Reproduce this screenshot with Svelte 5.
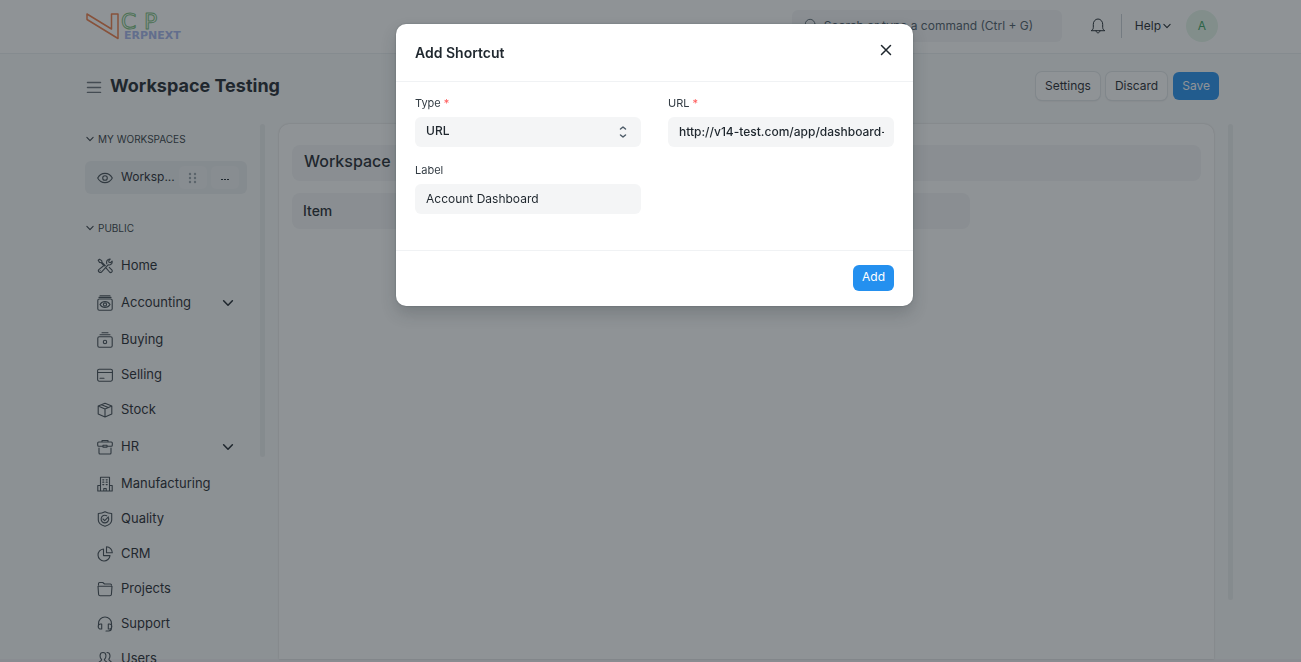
<script>
  const items = [
    { name: 'Home', icon: 'home' },
    { name: 'Accounting', icon: 'accounting', more: true },
    { name: 'Buying', icon: 'buying' },
    { name: 'Selling', icon: 'selling' },
    { name: 'Stock', icon: 'stock' },
    { name: 'HR', icon: 'hr', more: true },
    { name: 'Manufacturing', icon: 'manufacturing' },
    { name: 'Quality', icon: 'quality' },
    { name: 'CRM', icon: 'crm' },
    { name: 'Projects', icon: 'projects' },
    { name: 'Support', icon: 'support' },
    { name: 'Users', icon: 'users' }
  ];
  let url = $state('http://v14-test.com/app/dashboard-view/Accounts');
  let label = $state('Account Dashboard');
</script>

{#snippet chevron(size)}
  <svg class="chevron" width={size} height={size} viewBox="0 0 16 16"><path d="M3 5.500l5 5 5-5" /></svg>
{/snippet}

{#snippet icon(name)}
  <svg class="icon" width="16" height="16" viewBox="0 0 16 16" aria-hidden="true">
    {#if name === 'home'}
      <path d="M1.200 2.200l1.300-1 2.200 1.400.3 1.800L8.300 7.600M1.200 2.200l1.300 2.200 1.800.4 3 3.200M9.800 5.800C9 3.200 10.600.8 13.200 1.100l-1.500 1.700.3 1.500 1.500.4 1.600-1.500c.5 2.500-1.500 4.300-4 3.700L4.700 13.800c-1.600 1.800-4.300-.4-2.900-2.200L6 8.300M9.200 10.200l3.300 3.800c1.600 1.500 3.500-.5 2.300-2.200l-2.600-2.500M3.200 12.700h.1" />
    {:else if name === 'accounting'}
      <rect x=".8" y="4" width="14.400" height="11.200" rx="1.500" /><path d="M3 .8h10M2 2.400h12M3 9.500c2.300-4 7.700-4 10 0-2.300 4-7.700 4-10 0z" /><circle cx="8" cy="9.500" r="1.600" />
    {:else if name === 'buying'}
      <rect x=".8" y="4.800" width="14.400" height="10.400" rx="1.500" /><path d="M5 .8h6M3 2.800h10" /><circle cx="8" cy="10" r="1.700" />
    {:else if name === 'selling'}
      <rect x=".6" y="2.200" width="14.800" height="12" rx="1.600" /><path d="M.6 5.500h14.800M3 11.200h4" />
    {:else if name === 'stock'}
      <path d="M8 1.200l6.800 2.800v8L8 15 1.200 12V4zM1.200 4L8 7l6.800-3M8 7v8M4.500 2.700l6.800 2.900" />
    {:else if name === 'hr'}
      <path d="M5 3V1.500h6V3M6 7.200H1.700a1 1 0 0 1-1-1V4a1 1 0 0 1 1-1h12.600a1 1 0 0 1 1 1v2.200a1 1 0 0 1-1 1H10M6 6.300h4v1.800H6zM2 9v5a1 1 0 0 0 1 1h10a1 1 0 0 0 1-1V9" />
    {:else if name === 'manufacturing'}
      <path d="M3.500 15V1.300h9V15M3.500 9.500H.8V15h14.400V9.500h-2.700M6.800 15v-2.500h2.400V15" /><path class="dots" d="M5.800 3.800h1M9.200 3.800h1M5.800 6.200h1M9.200 6.200h1M5.800 8.600h1M9.200 8.600h1" />
    {:else if name === 'quality'}
      <path d="M8 .8c2 1.200 4.300 1.700 6.700 1.700V9c0 3-3.400 5.300-6.700 6.200C4.700 14.300 1.300 12 1.300 9V2.500C3.700 2.500 6 2 8 .8z" /><path d="M11.500 6.800A3.800 3.800 0 1 1 9.700 4.700M6 8l1.700 1.600 3.700-3.800" />
    {:else if name === 'crm'}
      <path d="M6.500 3A6 6 0 1 0 13 9.600H6.500zM9.500.8v6h5.800a6 6 0 0 0-5.800-6z" />
    {:else if name === 'projects'}
      <path d="M1.500 4V2.500a1 1 0 0 1 1-1h3.300L7.500 3h6a1 1 0 0 1 1 1M1 5.300h14l-.6 8.200a1.500 1.500 0 0 1-1.500 1.300H3.100a1.500 1.500 0 0 1-1.500-1.300z" />
    {:else if name === 'support'}
      <path d="M1.500 10V7.500a6.500 6.500 0 0 1 13 0V12a3 3 0 0 1-3 3H9M4.700 8v5h-1a2.500 2.500 0 0 1 0-5zM11.300 8v5h1a2.500 2.500 0 0 0 0-5z" />
    {:else if name === 'users'}
      <path d="M6 1.500c4 0 3.300 5.500 1.400 7 0 2 3 1.700 3.600 4.500H1c.6-2.800 3.600-2.500 3.600-4.500-1.900-1.500-2.600-7 1.400-7zM10 1.500c3.800 0 3.400 5 1.800 6.600 0 2 2.700 1.700 3.200 4.400" />
    {:else if name === 'eye'}
      <path d="M.7 8C4 1.800 12 1.800 15.300 8 12 14.200 4 14.200.7 8z" /><circle cx="8" cy="8" r="2.300" />
    {/if}
  </svg>
{/snippet}

<div class="page">
  <header class="navbar">
    <a class="logo" href="#home" aria-label="VCP ERPNext">
      <svg width="102" height="28" viewBox="0 0 102 28">
        <path class="mark" d="M2 2l24.500 15V2H33v24.500L2 7.500z" />
        <text class="outline" x="36" y="17">C</text><text class="outline" x="59" y="17">P</text>
        <text class="product" x="39" y="27">ERPNEXT</text>
      </svg>
    </a>
    <label class="search">
      <svg width="14" height="14" viewBox="0 0 16 16" aria-hidden="true"><circle cx="7" cy="7" r="5.500" /><path d="M11 11l4 4" /></svg>
      <input type="text" placeholder="Search or type a command (Ctrl + G)" aria-label="Search" />
    </label>
    <button class="plain bell" aria-label="Notifications">
      <svg width="16" height="16" viewBox="0 0 16 16"><path d="M1.500 12.500c1.300-.8 1.800-1.700 1.800-3V6.300C3.300 3.500 5.300 1 8 1s4.700 2.500 4.700 5.300v3.200c0 1.300.5 2.200 1.800 3zM6 12.700c.2 3 3.800 3 4 0" /></svg>
    </button>
    <button class="plain help">Help {@render chevron(10)}</button>
    <button class="avatar" aria-label="Account">A</button>
  </header>

  <div class="content">
    <div class="head">
      <button class="plain burger" aria-label="Toggle sidebar">
        <svg width="16" height="12" viewBox="0 0 16 12"><path d="M1.500 1.500h13M1.500 6.500h13M1.500 11.500h13" /></svg>
      </button>
      <h1>Workspace Testing</h1>
      <button class="btn">Settings</button>
      <button class="btn">Discard</button>
      <button class="btn primary">Save</button>
    </div>

    <div class="columns">
      <aside>
        <nav>
          <button class="plain group">{@render chevron(10)}MY WORKSPACES</button>
          <div class="item selected">
            {@render icon('eye')}
            <a href="#workspace">Worksp...</a>
            <button class="mini" aria-label="Drag">
              <svg width="10" height="12" viewBox="0 0 10 12"><path class="grip" d="M2 2h.01M7 2h.01M2 6h.01M7 6h.01M2 10h.01M7 10h.01" /></svg>
            </button>
            <button class="mini" aria-label="More">
              <svg width="10" height="12" viewBox="0 0 10 12"><path class="more" d="M1 7.500h2M4 7.500h2M7 7.500h2" /></svg>
            </button>
          </div>
          <button class="plain group public">{@render chevron(10)}PUBLIC</button>
          {#each items as item}
            <div class="item" class:tall={item.more}>
              {@render icon(item.icon)}
              <a href="#{item.icon}">{item.name}</a>
              {#if item.more}
                <button class="plain expand" aria-label="Expand {item.name}">{@render chevron(14)}</button>
              {/if}
            </div>
          {/each}
        </nav>
        <div class="track side"></div>
      </aside>
      <main>
        <h2 class="block wide">Workspace</h2>
        <h3 class="block narrow">Item</h3>
      </main>
      <div class="track"></div>
    </div>
  </div>
  <div class="bottom"></div>
</div>

<div class="backdrop">
  <div class="modal" role="dialog" aria-labelledby="dialog-title">
    <div class="modal-head">
      <h4 id="dialog-title">Add Shortcut</h4>
      <button class="plain close" aria-label="Close">
        <svg width="12" height="12" viewBox="0 0 12 12"><path d="M1.500 1.500l9 9M10.500 1.500l-9 9" /></svg>
      </button>
    </div>
    <div class="fields">
      <div class="field">
        <label for="type">Type <span>*</span></label>
        <div class="select">
          <select id="type"><option>URL</option></select>
          <svg width="8" height="12" viewBox="0 0 8 12" aria-hidden="true"><path d="M1.500 3L4 1l2.500 2M1.500 9L4 11l2.500-2" /></svg>
        </div>
      </div>
      <div class="field">
        <label for="url">URL <span>*</span></label>
        <input id="url" class="strong" type="text" bind:value={url} />
      </div>
      <div class="field">
        <label for="label">Label</label>
        <input id="label" type="text" bind:value={label} />
      </div>
    </div>
    <div class="modal-foot"><button class="add">Add</button></div>
  </div>
</div>

<style>
  :global(body) { margin: 0; font-family: Inter, sans-serif; font-size: 12px; color: #1f272e; }
  * { box-sizing: border-box; }
  button, input, select { font: inherit; color: inherit; border: 0; margin: 0; }
  svg { fill: none; stroke: currentColor; stroke-linecap: round; stroke-linejoin: round; flex: none; }
  a { color: inherit; text-decoration: none; }
  h1, h2, h3, h4 { margin: 0; }
  .plain { background: none; padding: 0; display: flex; align-items: center; }
  .chevron { stroke-width: 1.800; }

  .page { height: 100vh; overflow: hidden; display: flex; flex-direction: column; background: #f9fafa; }
  .navbar { flex: none; height: 54px; padding: 0 83px 2px 85px; display: flex; align-items: center; background: #fff; border-bottom: 1px solid #ebeef0; }
  .logo { display: flex; margin-right: auto; }
  .logo svg { overflow: visible; }
  .mark { stroke: #ef7c48; stroke-width: 1.500; }
  .outline { font: 22px "DejaVu Sans", sans-serif; stroke: #78bd7b; stroke-width: 1; }
  .product { font: bold 11px "DejaVu Sans", sans-serif; fill: #a5b4ec; stroke: none; }
  .search { width: 270px; height: 32px; padding: 0 12px 1px; display: flex; align-items: center; gap: 6px; background: #f4f5f6; border-radius: 6px; color: #4c5a67; }
  .search input { flex: 1; min-width: 0; padding: 0; background: none; outline: 0; }
  .search input::placeholder { color: #4c5a67; opacity: 1; }
  .bell { margin-left: 28px; padding-right: 15px; height: 24px; border-right: 1px solid #c8cfd5; }
  .help { gap: 1px; margin: 0 14px 0 13px; }
  .avatar { width: 32px; height: 32px; padding: 0; border-radius: 50%; background: #e4f5e9; color: #38a160; }

  .content { position: relative; z-index: 1; flex: 1; min-height: 0; padding: 0 68px 0 85px; display: flex; flex-direction: column; }
  .head { flex: none; height: 70px; padding: 0 14px 6px 0; display: flex; align-items: center; gap: 6px; }
  .burger { color: #687178; padding: 2px 2px 0 1px; }
  .burger svg { stroke-width: 1.500; }
  h1 { flex: 1; font-size: 18px; line-height: 28px; font-weight: 700; }
  .btn { height: 28px; padding: 0 9px 1px; border-radius: 6px; background: #fff; box-shadow: 0 0 0 1px #e2e6e9, 0 1px 2px #0002; }
  .primary { background: #2490ef; color: #fff; box-shadow: none; }

  .columns { flex: 1; min-height: 0; display: flex; }
  aside { width: 180px; flex: none; display: flex; justify-content: space-between; }
  nav { width: 162px; }
  .group { height: 30px; gap: 3px; font-size: 10px; color: #333c44; }
  .public { margin: 19px 0 5px; }
  .item { height: 35px; padding-left: 12px; display: flex; align-items: center; gap: 8px; font-size: 13px; }
  .item a { padding-bottom: 2px; }
  .item.tall { height: 39px; }
  .icon { color: #404a52; stroke-width: 1.100; }
  .dots { stroke-width: 1.200; }
  .selected { height: 33px; margin-top: 7px; padding-right: 8px; gap: 4px; font-size: 12px; background: #ebeef0; border-radius: 6px; }
  .selected a { flex: 1; padding-left: 4px; }
  .mini { width: 28px; height: 23px; padding: 0; display: flex; align-items: center; justify-content: center; border-radius: 5px; background: #f0f2f4; }
  .grip { stroke: #98a1a9; stroke-width: 2.400; }
  .more { stroke-width: 1; stroke-linecap: butt; }
  .expand { margin: 0 12px 0 auto; }
  .track { width: 5px; height: 476px; flex: none; margin-left: 14px; background: #ebeeef; border-radius: 3px; }
  .side { height: 333px; margin-left: 0; }
  main { flex: 1; margin: 0 0 3px 14px; padding: 21px 13px; background: #fff; border-radius: 10px 10px 0 0; box-shadow: 0 0 2px #0003; }
  .block { height: 36px; display: flex; align-items: center; background: #f4f5f6; border-radius: 8px; font-weight: 500; }
  .wide { padding: 0 12px 4px; font-size: 16px; }
  .narrow { width: calc(75% - 4px); margin-top: 12px; padding: 0 11px 1px; font-size: 14px; }
  .bottom { flex: none; height: 3px; margin-top: -3px; background: #f2f1f4; }

  .backdrop { position: fixed; z-index: 2; inset: 0; padding: 24px 0 0 8px; display: flex; justify-content: center; align-items: flex-start; background: #1f272e80; }
  .modal { width: 100%; max-width: 517px; background: #fff; border-radius: 10px; box-shadow: 0 8px 16px #1f272e33, 0 0 2px #1f272e55; }
  .modal-head { height: 58px; padding: 0 21px 0 19px; display: flex; align-items: center; justify-content: space-between; border-bottom: 1px solid #f0f2f4; }
  h4 { font-size: 14px; font-weight: 600; }
  .close { padding-bottom: 5px; }
  .close svg { stroke-width: 1.500; }
  .fields { padding: 14px 19px 36px; display: grid; grid-template-columns: 1fr 1fr; gap: 16px 27px; }
  .field { display: flex; flex-direction: column; gap: 6px; min-width: 0; }
  .field label { font-size: 11px; line-height: 15px; color: #333c44; }
  .field label span { color: #ff5858; }
  .field input, .field select { width: 100%; height: 30px; padding: 0 10px 2px 11px; background: #f4f5f6; border-radius: 6px; outline: 0; }
  .field select { appearance: none; font-weight: 500; padding-bottom: 3px; }
  .field .strong { font-weight: 500; }
  .select { display: grid; align-items: center; }
  .select > * { grid-area: 1 / 1; }
  .select svg { justify-self: end; margin-right: 14px; color: #4c5a67; stroke-width: 1.500; pointer-events: none; }
  .modal-foot { height: 56px; padding: 0 19px 2px; display: flex; align-items: center; justify-content: flex-end; border-top: 1px solid #f0f2f4; }
  .add { height: 26px; padding: 0 9px 2px; border-radius: 6px; background: #2490ef; color: #fff; }
</style>
